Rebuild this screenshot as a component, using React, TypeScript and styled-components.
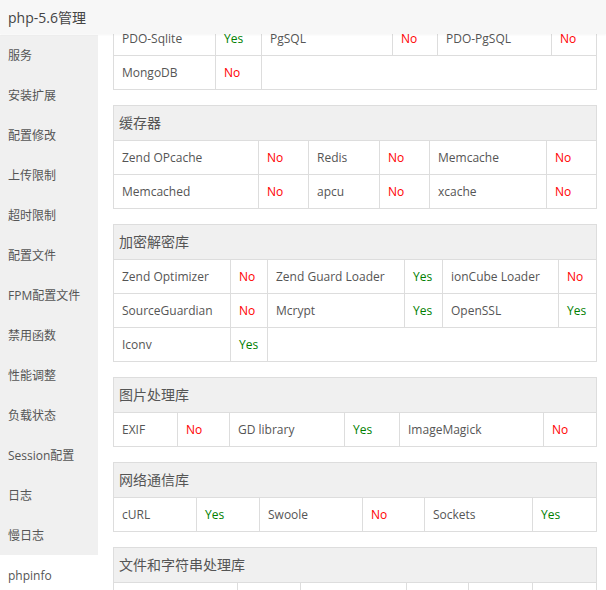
import React, { useLayoutEffect, useRef } from 'react';
import styled, { createGlobalStyle } from 'styled-components';

const GlobalStyle = createGlobalStyle`
  html, body {
    margin: 0;
    padding: 0;
    background: #fff;
    font-family: "Open Sans", "Noto Sans CJK SC", sans-serif;
  }
  * {
    box-sizing: border-box;
  }
`;

const Root = styled.div`
  width: 606px;
  height: 590px;
  display: flex;
  flex-direction: column;
  overflow: hidden;
`;

const Header = styled.div`
  height: 34px;
  flex: none;
  display: flex;
  align-items: center;
  padding-left: 8px;
  background: #f7f7f7;
  box-shadow: 0 1px 2px rgba(0, 0, 0, 0.04);
  color: #444;
  font-size: 14px;
  position: relative;
  z-index: 1;
`;

const Body = styled.div`
  flex: 1;
  display: flex;
  min-height: 0;
`;

const Sidebar = styled.div`
  width: 98px;
  flex: none;
  padding-top: 1px;
  display: flex;
  flex-direction: column;
`;

const NavItem = styled.div<{ $active?: boolean }>`
  height: 40px;
  flex: none;
  display: flex;
  align-items: center;
  padding-left: 8px;
  font-size: 12px;
  color: #555;
  background: ${(p) => (p.$active ? '#fff' : '#f0f0f0')};
`;

const Content = styled.div`
  flex: 1;
  overflow: hidden;
  padding: 15px 11px 15px 15px;
`;

const Table = styled.table`
  width: 100%;
  table-layout: fixed;
  border-collapse: collapse;
  margin-bottom: 15px;
  font-size: 12px;
  color: #555;
`;

const Col = styled.col<{ $w: number }>`
  width: ${(p) => p.$w}px;
`;

const Title = styled.th`
  background: #f0f0f0;
  border: 1px solid #ddd;
  text-align: left;
  font-weight: normal;
  font-size: 14px;
  line-height: 34px;
  padding: 0 5px;
  color: #555;
`;

const Cell = styled.td<{ $state?: 'yes' | 'no' }>`
  border: 1px solid #ddd;
  line-height: 33px;
  padding: 0 8px;
  white-space: nowrap;
  overflow: hidden;
  color: ${(p) => (p.$state === 'yes' ? '#008000' : p.$state === 'no' ? '#ff0000' : '#555')};
`;

type Item = [string, boolean];

interface Section {
  title: string;
  widths: number[];
  rows: Item[][];
}

const sections: Section[] = [
  {
    title: '数据库',
    widths: [102, 46, 131, 45, 114, 45],
    rows: [
      [['MySQL', true], ['MySQLi', true], ['PDO-MySQL', true]],
      [['PDO-Sqlite', true], ['PgSQL', false], ['PDO-PgSQL', false]],
      [['MongoDB', false]],
    ],
  },
  {
    title: '缓存器',
    widths: [145, 50, 71, 50, 117, 50],
    rows: [
      [['Zend OPcache', false], ['Redis', false], ['Memcache', false]],
      [['Memcached', false], ['apcu', false], ['xcache', false]],
    ],
  },
  {
    title: '加密解密库',
    widths: [117, 37, 137, 38, 116, 38],
    rows: [
      [['Zend Optimizer', false], ['Zend Guard Loader', true], ['ionCube Loader', false]],
      [['SourceGuardian', false], ['Mcrypt', true], ['OpenSSL', true]],
      [['Iconv', true]],
    ],
  },
  {
    title: '图片处理库',
    widths: [64, 52, 115, 55, 144, 53],
    rows: [[['EXIF', false], ['GD library', true], ['ImageMagick', false]]],
  },
  {
    title: '网络通信库',
    widths: [83, 63, 103, 62, 108, 64],
    rows: [[['cURL', true], ['Swoole', false], ['Sockets', true]]],
  },
  {
    title: '文件和字符串处理库',
    widths: [124, 63, 106, 62, 64, 64],
    rows: [[['Fileinfo', true], ['Mbstring', true], ['Zip', true]]],
  },
];

const navItems = [
  '服务',
  '安装扩展',
  '配置修改',
  '上传限制',
  '超时限制',
  '配置文件',
  'FPM配置文件',
  '禁用函数',
  '性能调整',
  '负载状态',
  'Session配置',
  '日志',
  '慢日志',
  'phpinfo',
];

function InfoTable({ section }: { section: Section }) {
  return (
    <Table>
      <colgroup>
        {section.widths.map((w, i) => (
          <Col key={i} $w={w} />
        ))}
      </colgroup>
      <thead>
        <tr>
          <Title colSpan={6}>{section.title}</Title>
        </tr>
      </thead>
      <tbody>
        {section.rows.map((row, r) => (
          <tr key={r}>
            {row.map(([name, ok]) => (
              <React.Fragment key={name}>
                <Cell>{name}</Cell>
                <Cell $state={ok ? 'yes' : 'no'}>{ok ? 'Yes' : 'No'}</Cell>
              </React.Fragment>
            ))}
            {row.length < 3 && <Cell colSpan={6 - row.length * 2} />}
          </tr>
        ))}
      </tbody>
    </Table>
  );
}

export default function App() {
  const contentRef = useRef<HTMLDivElement>(null);

  // the panel is shown scrolled part way down the list
  useLayoutEffect(() => {
    if (contentRef.current) contentRef.current.scrollTop = 97;
  }, []);

  return (
    <Root>
      <GlobalStyle />
      <Header>php-5.6管理</Header>
      <Body>
        <Sidebar>
          {navItems.map((item) => (
            <NavItem key={item} $active={item === 'phpinfo'}>
              {item}
            </NavItem>
          ))}
        </Sidebar>
        <Content ref={contentRef}>
          {sections.map((s) => (
            <InfoTable key={s.title} section={s} />
          ))}
        </Content>
      </Body>
    </Root>
  );
}
